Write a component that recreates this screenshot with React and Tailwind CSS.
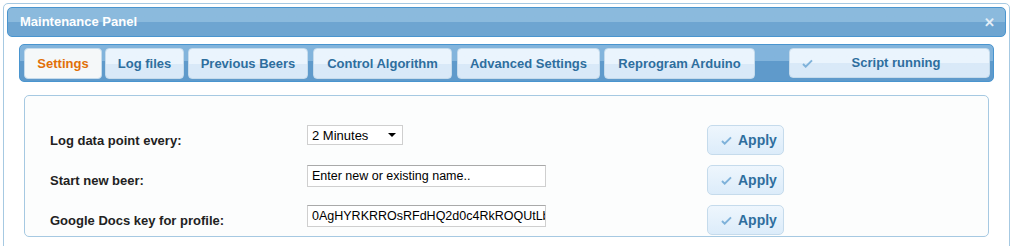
import { useState } from 'react';

const tabs = [
  { label: 'Settings', cls: 'w-[78px]' },
  { label: 'Log files', cls: 'ml-[3px] w-[79px]' },
  { label: 'Previous Beers', cls: 'ml-[4px] w-[120px]' },
  { label: 'Control Algorithm', cls: 'ml-[5px] w-[139px]' },
  { label: 'Advanced Settings', cls: 'ml-[5px] w-[143px]' },
  { label: 'Reprogram Arduino', cls: 'ml-[4px] w-[151px]' },
];

function Check({ className }) {
  return (
    <svg className={className} width="11" height="9" viewBox="0 0 12 10">
      <path d="M1 5.5 L4 8.5 L11 1.5" fill="none" stroke="currentColor" strokeWidth="2.2" />
    </svg>
  );
}

function ApplyButton() {
  return (
    <button className="flex h-[30px] w-[77px] items-center gap-[6px] rounded-[5px] border border-[#c5dbec] bg-gradient-to-b from-[#eef6fd] to-[#dcecfa] pl-[13px] text-[14px] font-bold text-[#2e6e9e]">
      <Check className="text-[#7fb2da]" />
      Apply
    </button>
  );
}

export default function App() {
  const [active, setActive] = useState(0);
  const [interval, setInterval] = useState('2');

  return (
    <div className="h-[246px] w-[1015px] overflow-hidden bg-white pl-[3px] pt-[3px] font-['Liberation_Sans',Arial,sans-serif] text-[13px]">
      <div className="h-[300px] w-[1007px] rounded-[5px] border border-[#a6c9e2] bg-white p-[3px]">
        {/* title bar */}
        <div className="flex h-[30px] items-center justify-between rounded-[5px] border border-[#4a95cf] bg-gradient-to-b from-[#8bbadd] from-50% to-[#6ea5d1] to-50% pl-[12px] pr-[10px]">
          <span className="font-bold text-white">Maintenance Panel</span>
          <span className="text-[13px] font-bold leading-none text-[#e4eef7]">✕</span>
        </div>

        <div className="pl-[12px] pt-[7px]">
          {/* tabs */}
          <div className="flex h-[38px] w-[975px] items-start rounded-[5px] border border-[#4a95cf] bg-gradient-to-b from-[#82b4dc] from-45% to-[#5f9acb] to-45% pl-[4px] pr-[3px] pt-[3px]">
            {tabs.map((t, i) => (
              <button
                key={t.label}
                onClick={() => setActive(i)}
                className={`h-[31px] shrink-0 whitespace-nowrap rounded-[4px] border text-center font-bold ${t.cls} ${i === active ? 'border-[#c5dbec] bg-[#f5f8f9] text-[#e17009]' : 'border-[#c5dbec] bg-gradient-to-b from-[#eaf4fd] from-50% to-[#d9e9f8] to-50% text-[#2e6e9e]'}`}
              >
                {t.label}
              </button>
            ))}
            <div className="ml-auto flex h-[30px] w-[201px] shrink-0 items-center rounded-[4px] border border-[#c5dbec] bg-gradient-to-b from-[#eaf4fd] from-50% to-[#d9e9f8] to-50% pl-[12px] font-bold text-[#2e6e9e]">
              <Check className="text-[#7fb2da]" />
              <span className="flex-1 whitespace-nowrap pr-[10px] text-center">Script running</span>
            </div>
          </div>

          {/* content */}
          <div className="mt-[13px] ml-[5px] h-[142px] w-[965px] rounded-[5px] border border-[#a6c9e2] bg-[#fcfdfd] pl-[25px] pt-[29px] text-[#222]">
            <div className="flex h-[30px] items-start">
              <span className="w-[257px] self-center pt-[2px] font-bold">Log data point every:</span>
              <div className="w-[400px]">
                <div className="relative h-[20px] w-[96px] border border-[#cfcfcf] bg-white">
                  <select
                    value={interval}
                    onChange={(e) => setInterval(e.target.value)}
                    className="h-full w-full appearance-none bg-transparent pl-[4px] text-[13px] text-black outline-none"
                  >
                    <option value="1">1 Minute</option>
                    <option value="2">2 Minutes</option>
                    <option value="5">5 Minutes</option>
                  </select>
                  <span className="pointer-events-none absolute right-[6px] top-[7px] h-0 w-0 border-x-[4px] border-t-[4px] border-x-transparent border-t-black" />
                </div>
              </div>
              <ApplyButton />
            </div>

            <div className="mt-[10px] flex h-[30px] items-start">
              <span className="w-[257px] self-center pt-[2px] font-bold">Start new beer:</span>
              <div className="w-[400px]">
                <input
                  defaultValue="Enter new or existing name.."
                  className="h-[22px] w-[239px] border border-[#cfcfcf] border-t-[#a9a9a9] bg-white pl-[4px] text-[12.5px] text-black outline-none"
                />
              </div>
              <ApplyButton />
            </div>

            <div className="mt-[10px] flex h-[30px] items-start">
              <span className="w-[257px] self-center pt-[2px] font-bold">Google Docs key for profile:</span>
              <div className="w-[400px]">
                <input
                  defaultValue="0AgHYRKRROsRFdHQ2d0c4RkROQUtLbnpFZ3NqbVE"
                  className="h-[22px] w-[239px] border border-[#cfcfcf] border-t-[#a9a9a9] bg-white pl-[4px] text-[12.5px] text-black outline-none"
                />
              </div>
              <ApplyButton />
            </div>
          </div>
        </div>
      </div>
    </div>
  );
}
